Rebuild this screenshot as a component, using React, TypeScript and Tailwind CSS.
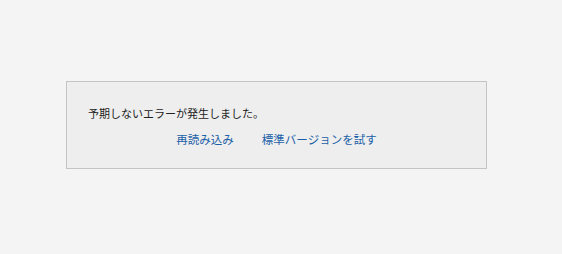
export default function App() {
  return (
    <div
      className="h-[254px] w-full bg-[#f4f4f4] pt-[81px]"
      style={{ fontFamily: '"Noto Sans CJK JP", "Noto Sans", sans-serif' }}
    >
      <div className="ml-[66px] w-[421px] border border-[#c4c4c4] bg-[#eeeeee] px-[21px] pt-[23px] pb-[21px]">
        <p className="text-[11px] leading-[16px] text-[#222222]">予期しないエラーが発生しました。</p>
        <div className="mt-[10px] flex justify-center gap-[28px] text-[11.5px] leading-[16px] text-[#1a5fa8]">
          <a href="#" className="hover:underline">再読み込み</a>
          <a href="#" className="hover:underline">標準バージョンを試す</a>
        </div>
      </div>
    </div>
  );
}
